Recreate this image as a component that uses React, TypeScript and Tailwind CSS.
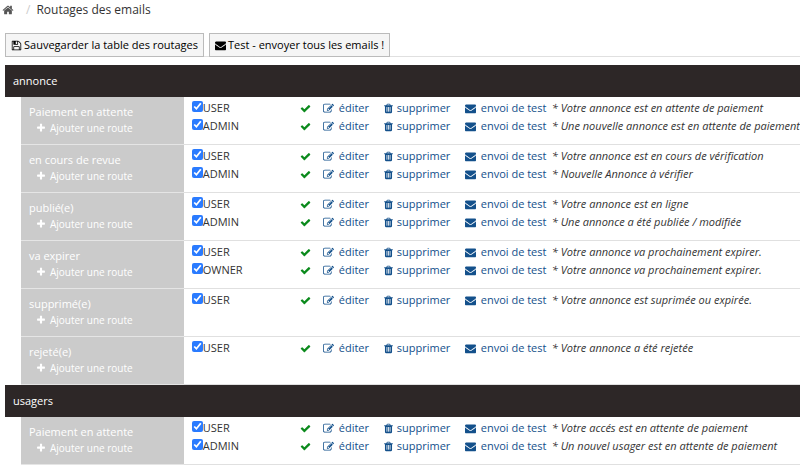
import { useState } from "react"

const icons = {
  home: "M1472 992v480q0 26-19 45t-45 19h-384v-384h-256v384h-384q-26 0-45-19t-19-45v-480q0-1 .5-3t.5-3l575-474 575 474q1 2 1 6zm223-69l-62 74q-8 9-21 11h-3q-13 0-21-7l-692-577-692 577q-12 8-24 7-13-2-21-11l-62-74q-8-10-7-23.5t11-21.5l719-599q32-26 76-26t76 26l244 204v-195q0-14 9-23t23-9h192q14 0 23 9t9 23v408l219 182q10 8 11 21.5t-7 23.5z",
  save: "M512 1536h768v-384h-768v384zm896 0h128v-896q0-14-10-38.5t-20-34.5l-281-281q-10-10-34-20t-39-10v416q0 40-28 68t-68 28h-576q-40 0-68-28t-28-68v-416h-128v1280h128v-416q0-40 28-68t68-28h832q40 0 68 28t28 68v416zm-384-928v-320q0-13-9.5-22.5t-22.5-9.5h-192q-13 0-22.5 9.5t-9.5 22.5v320q0 13 9.5 22.5t22.5 9.5h192q13 0 22.5-9.5t9.5-22.5zm640 32v928q0 40-28 68t-68 28h-1344q-40 0-68-28t-28-68v-1344q0-40 28-68t68-28h928q40 0 88 20t76 48l280 280q28 28 48 76t20 88z",
  envelope:
    "M1792 710v794q0 66-47 113t-113 47h-1472q-66 0-113-47t-47-113v-794q44 49 101 87 362 246 497 345 57 42 92.5 65.5t94.5 48 110 24.5h2q51 0 110-24.5t94.5-48 92.5-65.5q170-123 498-345 57-39 100-87zm0-294q0 79-49 151t-122 123q-376 261-468 325-10 7-42.5 31t-54 38.5-52 32.5-57.5 27-50 9h-2q-23 0-50-9t-57.5-27-52-32.5-54-38.5-42.5-31q-91-64-262-182.5t-205-142.5q-62-42-117-115.5t-55-136.5q0-78 41.5-130t118.5-52h1472q65 0 112.5 47t47.5 113z",
  check:
    "M1671 566q0 40-28 68l-724 724-136 136q-28 28-68 28t-68-28l-136-136-362-362q-28-28-28-68t28-68l136-136q28-28 68-28t68 28l294 295 656-657q28-28 68-28t68 28l136 136q28 28 28 68z",
  plus: "M1600 736v192q0 40-28 68t-68 28h-416v416q0 40-28 68t-68 28h-192q-40 0-68-28t-28-68v-416h-416q-40 0-68-28t-28-68v-192q0-40 28-68t68-28h416v-416q0-40 28-68t68-28h192q40 0 68 28t28 68v416h416q40 0 68 28t28 68z",
  edit: "M888 1184l116-116-152-152-116 116v56h96v96h56zm440-720q-16-16-33 1l-350 350q-17 17-1 33t33-1l350-350q17-17 1-33zm80 594v190q0 119-84.5 203.5t-203.5 84.5h-832q-119 0-203.5-84.5t-84.5-203.5v-832q0-119 84.5-203.5t203.5-84.5h832q63 0 117 25 15 7 18 23 3 17-9 29l-49 49q-14 14-32 8-23-6-45-6h-832q-66 0-113 47t-47 113v832q0 66 47 113t113 47h832q66 0 113-47t47-113v-126q0-13 9-22l64-64q15-15 35-7t20 29zm-96-738l288 288-672 672h-288v-288zm444 132l-92 92-288-288 92-92q28-28 68-28t68 28l152 152q28 28 28 68t-28 68z",
  trash:
    "M704 1376v-704q0-14-9-23t-23-9h-64q-14 0-23 9t-9 23v704q0 14 9 23t23 9h64q14 0 23-9t9-23zm256 0v-704q0-14-9-23t-23-9h-64q-14 0-23 9t-9 23v704q0 14 9 23t23 9h64q14 0 23-9t9-23zm256 0v-704q0-14-9-23t-23-9h-64q-14 0-23 9t-9 23v704q0 14 9 23t23 9h64q14 0 23-9t9-23zm-544-992h448l-48-117q-7-9-17-11h-317q-10 2-17 11zm928 32v64q0 14-9 23t-23 9h-96v948q0 83-47 143.5t-113 60.5h-832q-66 0-113-58.5t-47-141.5v-952h-96q-14 0-23-9t-9-23v-64q0-14 9-23t23-9h309l70-167q15-37 54-63t79-26h320q40 0 79 26t54 63l70 167h309q14 0 23 9t9 23z",
}

function Icon({ name, className = "size-[11px]" }: { name: keyof typeof icons; className?: string }) {
  return (
    <svg viewBox="0 0 1792 1792" fill="currentColor" aria-hidden="true" className={`shrink-0 ${className}`}>
      <path d={icons[name]} />
    </svg>
  )
}

interface Route {
  role: string
  note: string
}

interface State {
  name: string
  routes: Route[]
}

const groups: { name: string; states: State[] }[] = [
  {
    name: "annonce",
    states: [
      {
        name: "Paiement en attente",
        routes: [
          { role: "USER", note: "Votre annonce est en attente de paiement" },
          { role: "ADMIN", note: "Une nouvelle annonce est en attente de paiement" },
        ],
      },
      {
        name: "en cours de revue",
        routes: [
          { role: "USER", note: "Votre annonce est en cours de vérification" },
          { role: "ADMIN", note: "Nouvelle Annonce à vérifier" },
        ],
      },
      {
        name: "publié(e)",
        routes: [
          { role: "USER", note: "Votre annonce est en ligne" },
          { role: "ADMIN", note: "Une annonce a été publiée / modifiée" },
        ],
      },
      {
        name: "va expirer",
        routes: [
          { role: "USER", note: "Votre annonce va prochainement expirer." },
          { role: "OWNER", note: "Votre annonce va prochainement expirer." },
        ],
      },
      {
        name: "supprimé(e)",
        routes: [{ role: "USER", note: "Votre annonce est suprimée ou expirée." }],
      },
      {
        name: "rejeté(e)",
        routes: [{ role: "USER", note: "Votre annonce a été rejetée" }],
      },
    ],
  },
  {
    name: "usagers",
    states: [
      {
        name: "Paiement en attente",
        routes: [
          { role: "USER", note: "Votre accés est en attente de paiement" },
          { role: "ADMIN", note: "Un nouvel usager est en attente de paiement" },
        ],
      },
    ],
  },
]

function RouteLine({ role, note }: Route) {
  const [enabled, setEnabled] = useState(true)

  return (
    <li className="flex h-[18px] items-center text-[#13508b]">
      <label className="flex w-[108px] shrink-0 items-center text-[#333]">
        <input
          type="checkbox"
          checked={enabled}
          onChange={(e) => setEnabled(e.target.checked)}
          className="mb-1 size-[11px] accent-[#2a7bff]"
        />
        {role}
      </label>
      <span className="w-[23px] shrink-0 text-[#0b8a1c]">
        <Icon name="check" />
      </span>
      <a href="#editer" className="flex w-[60px] shrink-0 items-center gap-[5px]">
        <Icon name="edit" />
        éditer
      </a>
      <a href="#supprimer" className="flex w-[82px] shrink-0 items-center gap-[3px]">
        <Icon name="trash" />
        supprimer
      </a>
      <a href="#test" className="flex w-[87px] shrink-0 items-center gap-[5px]">
        <Icon name="envelope" />
        envoi de test
      </a>
      <em className="text-[#333]">* {note}</em>
    </li>
  )
}

export default function App() {
  return (
    <div className="overflow-hidden bg-white font-['Open_Sans',sans-serif] text-[11px] leading-[18px] whitespace-nowrap text-[#333]">
      <nav className="flex h-5 items-center pl-0.5 text-xs">
        <a href="#accueil" aria-label="Accueil" className="text-[#555]">
          <Icon name="home" className="size-3" />
        </a>
        <span className="pr-1.5 pl-3 text-[#ccc]">/</span>
        <span>Routages des emails</span>
      </nav>

      <div className="mt-[13px] ml-[5px] flex gap-[5px] border-b border-[#e0e0e0]">
        <button type="button" className="-mb-px flex h-6 items-center gap-0.5 border border-[#bbb] bg-[#f5f5f5] px-[5px] text-black">
          <Icon name="save" />
          Sauvegarder la table des routages
        </button>
        <button type="button" className="-mb-px flex h-6 items-center gap-0.5 border border-[#bbb] bg-[#f5f5f5] px-[5px] text-black">
          <Icon name="envelope" />
          Test - envoyer tous les emails !
        </button>
      </div>

      <div className="mt-2 pl-[5px]">
        <table className="w-full border-separate border-spacing-0">
          {groups.map((group) => (
            <tbody key={group.name}>
              <tr className="h-8 bg-[#2d2727] text-white">
                <th colSpan={3} className="px-2 py-0 text-left font-medium">
                  {group.name}
                </th>
              </tr>
              {group.states.map((state) => (
                <tr key={state.name} className="h-12">
                  <td className="w-4 p-0" />
                  <th className="w-[163px] border-b border-[#e5e5e5] bg-[#cbcbcb] px-2 pt-[7px] pb-0 text-left align-top leading-4 font-medium text-white">
                    <div>{state.name}</div>
                    <a href="#ajouter" className="flex items-center gap-1 pl-[7px] text-[10px]">
                      <Icon name="plus" className="size-2.5" />
                      Ajouter une route
                    </a>
                  </th>
                  <td className="border-b border-[#e0e0e0] p-0 pt-0.5 pl-2 align-top">
                    <ul>
                      {state.routes.map((route) => (
                        <RouteLine key={route.role} {...route} />
                      ))}
                    </ul>
                  </td>
                </tr>
              ))}
            </tbody>
          ))}
        </table>
      </div>
    </div>
  )
}
